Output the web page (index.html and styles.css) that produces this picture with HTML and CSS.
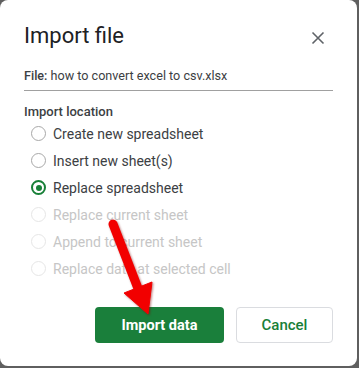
FILE: index.html
```html
<!DOCTYPE html>
<html>
<head>
<meta charset="utf-8">
<link rel="stylesheet" href="styles.css">
</head>
<body>
<div class="dialog">
  <div class="header">
    <h1 class="title">Import file</h1>
    <svg class="close" width="24" height="24" viewBox="0 0 24 24"><path d="M6.5 6.5 L17.5 17.5 M17.5 6.5 L6.5 17.5" stroke="#5f6368" stroke-width="1.6" fill="none"/></svg>
  </div>
  <div class="file"><span class="file-label">File:</span> how to convert excel to csv.xlsx</div>
  <div class="section">Import location</div>
  <div class="options">
    <div class="opt"><span class="radio"></span><span>Create new spreadsheet</span></div>
    <div class="opt"><span class="radio"></span><span>Insert new sheet(s)</span></div>
    <div class="opt"><span class="radio checked"></span><span>Replace spreadsheet</span></div>
    <div class="opt disabled"><span class="radio"></span><span>Replace current sheet</span></div>
    <div class="opt disabled"><span class="radio"></span><span>Append to current sheet</span></div>
    <div class="opt disabled"><span class="radio"></span><span>Replace data at selected cell</span></div>
  </div>
  <div class="footer">
    <button class="btn primary">Import data</button>
    <button class="btn secondary">Cancel</button>
  </div>
  <svg class="arrow" width="357" height="366" viewBox="0 0 357 366">
    <g fill="#f20000" stroke="#f20000">
      <line x1="113" y1="224" x2="139" y2="291" stroke-width="9" stroke-linecap="round"/>
      <polygon points="124,293 152,282 148,314" stroke-width="1" stroke-linejoin="round"/>
    </g>
  </svg>
</div>
</body>
</html>
```
FILE: styles.css
```css
html, body {
  margin: 0;
  padding: 0;
  background: #5f5f5f;
  width: 359px;
  height: 368px;
  overflow: hidden;
}
.dialog {
  position: relative;
  box-sizing: border-box;
  width: 357px;
  height: 366px;
  background: #fff;
  border-radius: 8px;
  padding: 22px 24px 23px 24px;
  display: flex;
  flex-direction: column;
  font-family: Roboto, "Liberation Sans", sans-serif;
  color: #3c4043;
}
.header {
  display: flex;
  justify-content: space-between;
  align-items: flex-start;
  height: 28px;
}
.title {
  margin: 0;
  font-size: 22px;
  line-height: 28px;
  font-weight: 400;
  color: #202124;
}
.close {
  margin-top: 4px;
  margin-right: 3px;
}
.file {
  margin-top: 16px;
  font-size: 12.6px;
  line-height: 20px;
  padding-bottom: 4px;
  border-bottom: 1px solid #a0a0a0;
}
.file-label {
  font-weight: 500;
}
.section {
  margin-top: 13px;
  font-size: 13px;
  line-height: 16px;
  font-weight: 500;
  color: #3c4043;
}
.options {
  display: flex;
  flex-direction: column;
}
.opt {
  height: 27px;
  display: flex;
  align-items: center;
  gap: 7px;
  padding-left: 7px;
  font-size: 14px;
  color: #3c4043;
}
.radio {
  box-sizing: border-box;
  width: 15px;
  height: 15px;
  border-radius: 50%;
  border: 1.5px solid #a8a8a8;
  flex: none;
  position: relative;
}
.radio.checked {
  border: 2px solid #188038;
}
.radio.checked::after {
  content: "";
  position: absolute;
  left: 2.5px;
  top: 2.5px;
  width: 6px;
  height: 6px;
  border-radius: 50%;
  background: #188038;
}
.opt.disabled {
  color: #c6c6c6;
}
.opt.disabled .radio {
  border-color: #e6e6e6;
}
.footer {
  margin-top: auto;
  display: flex;
  justify-content: flex-end;
  gap: 12px;
}
.btn {
  height: 36px;
  border-radius: 4px;
  font-family: Roboto, "Liberation Sans", sans-serif;
  font-size: 15px;
  font-weight: 500;
  padding: 0;
}
.primary {
  width: 129px;
  background: #1a7f3b;
  border: none;
  color: #fff;
  font-weight: 700;
  font-size: 14.5px;
}
.secondary {
  width: 97px;
  background: #fff;
  border: 1px solid #dadce0;
  color: #188038;
}
.arrow {
  position: absolute;
  left: 0;
  top: 0;
  pointer-events: none;
  filter: drop-shadow(1px 1px 1px rgba(120,0,0,0.5));
}
```
